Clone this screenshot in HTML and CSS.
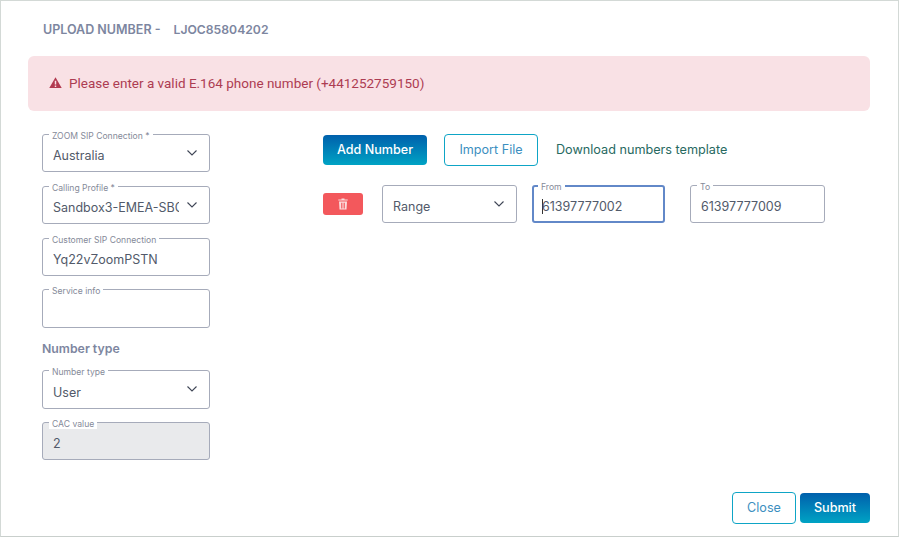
FILE: index.html
```html
<!DOCTYPE html>
<html lang="en">

<head>
	<meta charset="UTF-8">
	<title>Upload number</title>
	<link rel="stylesheet" href="styles.css">
</head>

<body>
	<div class="modal">
		<h2 class="modal-title"><span>UPLOAD NUMBER -</span><span class="modal-ref">LJOC85804202</span></h2>

		<div class="alert">
			<svg class="alert-icon" viewBox="0 0 14 12" width="13" height="11">
				<path d="M7 0.3 13.8 12H0.2Z M6.2 4.2V8.2H7.8V4.2Z M6.2 9.2V10.8H7.8V9.2Z" fill="#b23a50" fill-rule="evenodd" />
			</svg>
			<span>Please enter a valid E.164 phone number (+441252759150)</span>
		</div>

		<div class="modal-body">
			<div class="side">
				<div class="field select">
					<label>ZOOM SIP Connection *</label>
					<div class="value">Australia</div>
					<svg class="chevron" viewBox="0 0 10 6" width="10" height="6"><path d="M0.5 0.5 5 5 9.5 0.5" /></svg>
				</div>
				<div class="field select">
					<label>Calling Profile *</label>
					<div class="value">Sandbox3-EMEA-SBC</div>
					<svg class="chevron" viewBox="0 0 10 6" width="10" height="6"><path d="M0.5 0.5 5 5 9.5 0.5" /></svg>
				</div>
				<div class="field">
					<label>Customer SIP Connection</label>
					<div class="value">Yq22vZoomPSTN</div>
				</div>
				<div class="field field-tall service">
					<label>Service info</label>
					<div class="value"></div>
				</div>
				<h3 class="side-title">Number type</h3>
				<div class="field select field-tall">
					<label>Number type</label>
					<div class="value">User</div>
					<svg class="chevron" viewBox="0 0 10 6" width="10" height="6"><path d="M0.5 0.5 5 5 9.5 0.5" /></svg>
				</div>
				<div class="field disabled">
					<label>CAC value</label>
					<div class="value">2</div>
				</div>
			</div>

			<div class="main">
				<div class="actions">
					<button class="btn btn-primary btn-add">Add Number</button>
					<button class="btn btn-outline btn-import">Import File</button>
					<a class="template-link">Download numbers template</a>
				</div>
				<div class="number-row">
					<button class="btn-delete">
						<svg viewBox="0 0 10 12" width="10" height="12">
							<path d="M3.5 0.5H6.5V1.5H9.7V2.6H0.3V1.5H3.5Z M1 3.4H9L8.5 11.6H1.5Z M3 4.8V10.4H3.8V4.8Z M4.6 4.8V10.4H5.4V4.8Z M6.2 4.8V10.4H7V4.8Z" fill="#fbdcdc" fill-rule="evenodd" />
						</svg>
					</button>
					<div class="field select range">
						<div class="value">Range</div>
						<svg class="chevron" viewBox="0 0 10 6" width="10" height="6"><path d="M0.5 0.5 5 5 9.5 0.5" /></svg>
					</div>
					<div class="field focused num-from">
						<label>From</label>
						<div class="value"><i class="caret"></i>61397777002</div>
					</div>
					<div class="field num-to">
						<label>To</label>
						<div class="value">61397777009</div>
					</div>
				</div>
			</div>
		</div>

		<div class="modal-footer">
			<button class="btn btn-outline btn-close">Close</button>
			<button class="btn btn-primary btn-submit">Submit</button>
		</div>
	</div>
</body>

</html>
```

FILE: styles.css
```css
* {
	box-sizing: border-box;
}

body {
	margin: 0;
	background: #fff;
	font-family: 'Inter', sans-serif;
}

.modal {
	width: 899px;
	height: 537px;
	border: 1px solid #d3d9d6;
	border-bottom-color: #c9cfcc;
	background: #fff;
	padding: 0 28px 0 27px;
	display: flex;
	flex-direction: column;
}

.modal-title {
	margin: 20px 0 0 15px;
	height: 17px;
	font-size: 12.5px;
	line-height: 17px;
	font-weight: 600;
	color: #7d86a0;
	display: flex;
	gap: 13px;
}

.modal-ref {
	font-size: 12.2px;
}

.alert {
	margin-top: 18px;
	height: 55px;
	background: #f9e1e5;
	border-radius: 6px;
	padding: 0 0 2px 21px;
	display: flex;
	align-items: center;
	gap: 7px;
	color: #ad3c52;
	font-family: 'Roboto', sans-serif;
	font-size: 13.5px;
}

.modal-body {
	display: flex;
	flex: 1;
	padding-top: 23px;
}

.side {
	width: 168px;
	margin-left: 14px;
	display: flex;
	flex-direction: column;
	gap: 14px;
}

.field {
	position: relative;
	height: 38px;
	border: 1px solid #a6abba;
	border-radius: 3px;
	background: #fff;
	padding: 12px 10px 0;
}

.field-tall {
	height: 39px;
	padding-top: 13px;
}

.service {
	margin-top: -1px;
}

.field label {
	position: absolute;
	top: -4px;
	left: 6px;
	padding: 0 3px;
	background: #fff;
	font-size: 8.6px;
	line-height: 10px;
	color: #858a99;
	white-space: nowrap;
}

.value {
	height: 18px;
	font-size: 12.5px;
	line-height: 18px;
	color: #525a6a;
	white-space: nowrap;
	overflow: hidden;
}

.select .value {
	margin-right: 20px;
}

.chevron {
	position: absolute;
	right: 12px;
	top: 15px;
	fill: none;
	stroke: #3f4656;
	stroke-width: 1.1;
}

.side-title {
	margin: -1px 0 -1px;
	font-size: 12.3px;
	line-height: 16px;
	font-weight: 600;
	color: #7d86a0;
}

.disabled {
	margin-top: -1px;
	background: #e9eaec;
}

.main {
	margin-left: 113px;
	flex: 1;
}

.actions {
	display: flex;
	align-items: center;
	height: 32px;
}

.btn {
	border-radius: 4px;
	font-family: 'Inter', sans-serif;
	font-size: 12.6px;
	cursor: pointer;
	padding: 0 0 2px;
}

.btn-primary {
	border: none;
	color: #fff;
	font-weight: 500;
	background: linear-gradient(#0060ac, #00a3c4);
}

.btn-outline {
	border: 1px solid #0ea5c6;
	background: #fff;
	color: #3c8fc0;
}

.btn-add {
	width: 104px;
	height: 30px;
}

.btn-import {
	width: 94px;
	height: 32px;
	margin-left: 17px;
}

.template-link {
	margin-left: 18px;
	padding-bottom: 2px;
	font-size: 12.65px;
	color: #27695f;
}

.number-row {
	display: flex;
	align-items: center;
	margin-top: 19px;
}

.btn-delete {
	width: 40px;
	height: 22px;
	border: none;
	border-radius: 3px;
	background: #f3585c;
	padding: 0;
	display: flex;
	align-items: center;
	justify-content: center;
}

.number-row .field {
	width: 134.5px;
}

.number-row .range {
	margin-left: 19px;
}

.number-row .num-from {
	width: 133px;
	margin-left: 15.5px;
}

.number-row .num-to {
	margin-left: 25px;
}

.focused {
	border: 2px solid #6288c8;
	padding: 11px 8px 0;
}

.focused label {
	top: -5px;
	left: 4px;
}

.caret {
	display: inline-block;
	width: 1px;
	height: 15px;
	margin: 0 -1px -3px 0;
	background: #333;
}

.modal-footer {
	display: flex;
	justify-content: flex-end;
	align-items: center;
	gap: 4px;
	padding-bottom: 12px;
}

.btn-close {
	width: 64px;
	height: 32px;
}

.btn-submit {
	width: 70px;
	height: 30px;
}
```
